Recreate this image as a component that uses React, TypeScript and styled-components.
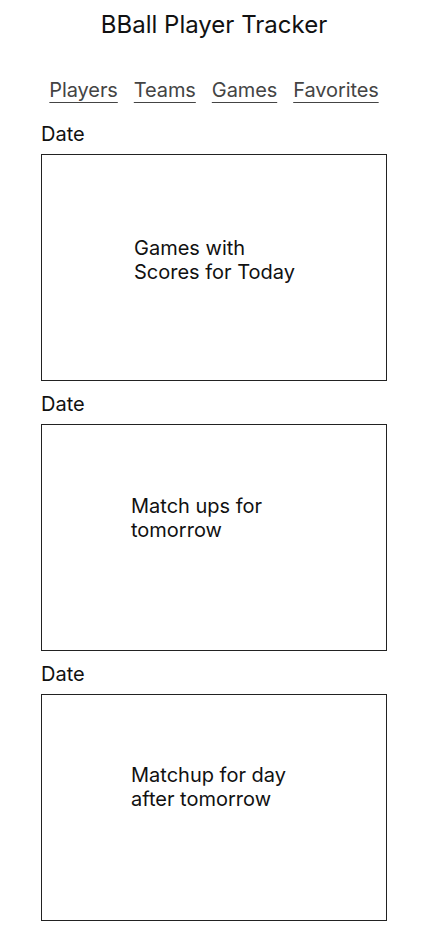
import React from "react";
import styled, { createGlobalStyle } from "styled-components";

const Global = createGlobalStyle`
  html, body { margin: 0; padding: 0; background: #fff; }
  body { font-family: Inter, "Noto Sans", sans-serif; color: #111; }
`;

const Page = styled.div`
  width: 428px;
  display: flex;
  flex-direction: column;
`;

const Title = styled.h1`
  margin: 0;
  padding-top: 11px;
  font-size: 24px;
  line-height: 28px;
  font-weight: 400;
  text-align: center;
  color: #111;
`;

const Nav = styled.nav`
  margin-top: 39px;
  display: flex;
  justify-content: center;
  gap: 16px;
`;

const NavLink = styled.a`
  font-size: 20px;
  line-height: 24px;
  letter-spacing: -0.1px;
  color: #444;
  text-decoration: underline;
  text-underline-offset: 5px;
  text-decoration-thickness: 1px;
  cursor: pointer;
`;

const Sections = styled.div`
  margin-top: 20px;
  padding: 0 41px;
  display: flex;
  flex-direction: column;
  gap: 11px;
`;

const Section = styled.section`
  display: flex;
  flex-direction: column;
  gap: 8px;
`;

const Label = styled.div`
  font-size: 20px;
  line-height: 24px;
  color: #111;
`;

const Box = styled.div<{ $top: number; $left: number }>`
  box-sizing: border-box;
  height: 227px;
  border: 1px solid #222;
  padding: ${(p) => p.$top}px 0 0 ${(p) => p.$left}px;
  font-size: 20px;
  line-height: 24px;
  color: #111;
`;

const sections = [
  { lines: ["Games with", "Scores for Today"], top: 81, left: 92 },
  { lines: ["Match ups for", "tomorrow"], top: 69, left: 89 },
  { lines: ["Matchup for day", "after tomorrow"], top: 68, left: 89 },
];

export default function App() {
  return (
    <Page>
      <Global />
      <Title>BBall Player Tracker</Title>
      <Nav>
        <NavLink>Players</NavLink>
        <NavLink>Teams</NavLink>
        <NavLink>Games</NavLink>
        <NavLink>Favorites</NavLink>
      </Nav>
      <Sections>
        {sections.map((s, i) => (
          <Section key={i}>
            <Label>Date</Label>
            <Box $top={s.top} $left={s.left}>
              {s.lines[0]}
              <br />
              {s.lines[1]}
            </Box>
          </Section>
        ))}
      </Sections>
    </Page>
  );
}
